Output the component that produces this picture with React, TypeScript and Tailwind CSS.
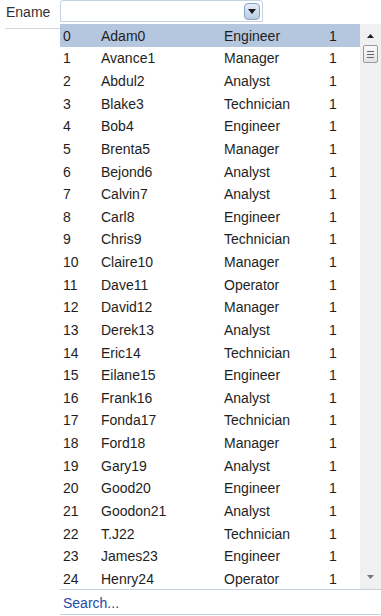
import React from "react";

const rows: [string, string][] = [
  ["Adam0", "Engineer"],
  ["Avance1", "Manager"],
  ["Abdul2", "Analyst"],
  ["Blake3", "Technician"],
  ["Bob4", "Engineer"],
  ["Brenta5", "Manager"],
  ["Bejond6", "Analyst"],
  ["Calvin7", "Analyst"],
  ["Carl8", "Engineer"],
  ["Chris9", "Technician"],
  ["Claire10", "Manager"],
  ["Dave11", "Operator"],
  ["David12", "Manager"],
  ["Derek13", "Analyst"],
  ["Eric14", "Technician"],
  ["Eilane15", "Engineer"],
  ["Frank16", "Analyst"],
  ["Fonda17", "Technician"],
  ["Ford18", "Manager"],
  ["Gary19", "Analyst"],
  ["Good20", "Engineer"],
  ["Goodon21", "Analyst"],
  ["T.J22", "Technician"],
  ["James23", "Engineer"],
  ["Henry24", "Operator"],
];

export default function App() {
  return (
    <div className="w-[381px] h-[616px] bg-white text-[14px] text-[#1e1e1e] font-['Liberation_Sans',Tahoma,sans-serif] overflow-hidden">
      <div className="flex items-start">
        <div className="w-[60px] shrink-0 pl-[5px]">
          <div className="h-[24px] pt-[2px] pl-[1px] text-[#333]">Ename</div>
          <div className="h-[5px] border-b border-[#d0d8e0]" />
        </div>
        <div className="w-[321px]">
          <div className="w-[203px] h-[22px] border border-[#c4d1de] rounded-t-[3px] flex items-center justify-end pr-[2px]">
            <div className="w-[16px] h-[17px] rounded-[4px] border border-[#8aa4c3] bg-gradient-to-b from-[#e6eef8] to-[#b8cbe4] flex items-center justify-center">
              <svg width="8" height="5" viewBox="0 0 8 5">
                <path d="M0 0h8L4 5z" fill="#1a1a1a" />
              </svg>
            </div>
          </div>
          <div className="h-[2px]" />
          <div className="flex h-[566px] border-b border-[#c5d2e0]">
            <div className="w-[300px]">
              {rows.map(([name, role], i) => (
                <div
                  key={i}
                  className={
                    "flex items-center h-[22.64px] pl-[3px] pt-[2px] " +
                    (i === 0 ? "bg-[#b5c7de]" : "")
                  }
                >
                  <span className="w-[38px]">{i}</span>
                  <span className="w-[123px]">{name}</span>
                  <span className="w-[105px]">{role}</span>
                  <span>1</span>
                </div>
              ))}
            </div>
            <div className="w-[21px] bg-[#f0f0f0] flex flex-col items-center relative">
              <svg width="7" height="4" viewBox="0 0 7 4" className="mt-[10px]">
                <path d="M3.5 0L7 4H0z" fill="#222" />
              </svg>
              <div className="mt-[7px] w-[15px] h-[18px] border border-[#9a9a9a] rounded-[2px] bg-gradient-to-b from-[#fafafa] to-[#e4e4e4] flex flex-col items-center justify-center gap-[2px]">
                <div className="w-[7px] h-[1px] bg-[#666]" />
                <div className="w-[7px] h-[1px] bg-[#666]" />
                <div className="w-[7px] h-[1px] bg-[#666]" />
              </div>
              <svg width="7" height="4" viewBox="0 0 7 4" className="absolute bottom-[10px]">
                <path d="M0 0h7L3.5 4z" fill="#777" />
              </svg>
            </div>
          </div>
          <div className="h-[25px] pl-[3px] pt-[3px] text-[#1f4aa8] border-b border-[#c5d2e0]">Search...</div>
        </div>
      </div>
    </div>
  );
}
